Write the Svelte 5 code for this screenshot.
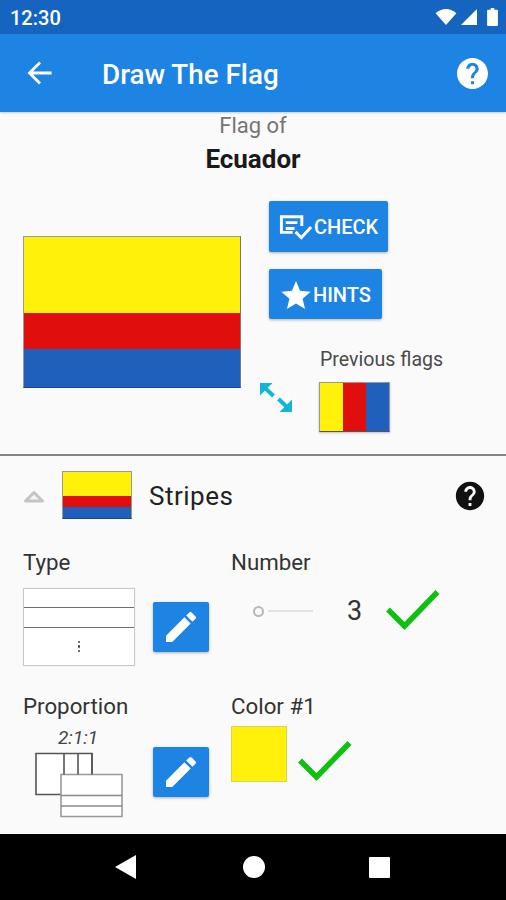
<script>
  const pencil = "M3 17.25V21h3.75L17.81 9.94l-3.75-3.75L3 17.25zM20.71 7.04a1 1 0 0 0 0-1.41l-2.34-2.34a1 1 0 0 0-1.41 0l-1.83 1.83 3.75 3.75 1.83-1.83z";
  const help = "M12 2C6.48 2 2 6.48 2 12s4.48 10 10 10 10-4.48 10-10S17.52 2 12 2zm1 17h-2v-2h2v2zm2.07-7.75l-.9.92C13.45 12.9 13 13.5 13 15h-2v-.5c0-1.1.45-2.1 1.17-2.83l1.24-1.26c.37-.36.59-.86.59-1.41 0-1.1-.9-2-2-2s-2 .9-2 2H8c0-2.21 1.79-4 4-4s4 1.79 4 4c0 .88-.36 1.68-.93 2.25z";
</script>

<div class="screen">
  <header class="status">
    <span class="time">12:30</span>
    <span class="status-icons">
      <svg class="wifi" width="22" height="16" viewBox="0 0 22 17"><path d="M0 4.500C3 1.700 6.800 0 11 0s8 1.700 11 4.500L11 17z" fill="#fff"/></svg>
      <svg class="signal" width="18" height="16" viewBox="0 0 17 17"><path d="M0 17L17 0v17z" fill="#fff"/></svg>
      <svg class="battery" width="11" height="18" viewBox="0 0 12 20"><path d="M4 0h4v2h3a1 1 0 0 1 1 1v16a1 1 0 0 1-1 1H1a1 1 0 0 1-1-1V3a1 1 0 0 1 1-1h3z" fill="#fff"/></svg>
    </span>
  </header>

  <nav class="appbar">
    <svg class="back" width="26" height="26" viewBox="0 0 26 26"><path d="M24.500 13H3M13 2.500L2.500 13 13 23.500" fill="none" stroke="#fff" stroke-width="2.800"/></svg>
    <h1>Draw The Flag</h1>
    <svg width="31" height="31" viewBox="2 2 20 20"><path d={help} fill="#fff"/></svg>
  </nav>

  <main>
    <div class="title">
      <div class="flag-of">Flag of</div>
      <div class="country">Ecuador</div>
    </div>

    <section class="top">
      <div class="flag big"><i class="y"></i><i class="r"></i><i class="b"></i></div>
      <div class="expand-col">
        <svg width="32" height="30" viewBox="0 0 32 30" fill="#12b4d8">
          <path d="M0 0h12.500L0 12.500z"/>
          <path d="M32 29H19.500L32 16.500z"/>
          <path d="M4 4l9.500 9M28 25l-9.500-9" stroke="#12b4d8" stroke-width="4" fill="none"/>
        </svg>
      </div>
      <div class="actions">
        <button class="btn check">
          <svg width="35" height="30" viewBox="0 0 36 30">
            <path d="M2 3h24v11h-3V6H5v13h10v3H2z M8 9h12v3H8z M8 15h9v3H8z" fill="#fff"/>
            <path d="M18 20l6 6 10-11" fill="none" stroke="#fff" stroke-width="3"/>
          </svg>
          <span>CHECK</span>
        </button>
        <button class="btn hints">
          <svg width="30" height="29" viewBox="0 0 31 30"><path d="M15.500 1l4.200 10.200 11 .9-8.400 7.200 2.600 10.700-9.400-5.800-9.400 5.800 2.600-10.700L.3 12.100l11-.9z" fill="#fff"/></svg>
          <span>HINTS</span>
        </button>
        <div class="previous">
          <div class="prev-label">Previous flags</div>
          <div class="flag mini-v"><i class="y"></i><i class="r"></i><i class="b"></i></div>
        </div>
      </div>
    </section>

    <hr />

    <section class="stripes">
      <div class="stripes-head">
        <svg width="22" height="13" viewBox="0 0 22 13"><path d="M11 2.500L2.500 11h17z" fill="#f4f4f4" stroke="#c4c4c4" stroke-width="3" stroke-linejoin="round"/></svg>
        <div class="flag small"><i class="y"></i><i class="r"></i><i class="b"></i></div>
        <h2>Stripes</h2>
        <svg class="head-help" width="34" height="34" viewBox="0 0 24 24"><path d={help} fill="#111"/></svg>
      </div>

      <div class="grid">
        <div class="cell">
          <div class="label">Type</div>
          <div class="row type-row">
            <div class="type-box">
              <div class="type-line"></div>
              <div class="type-line"></div>
              <div class="type-dots"><b></b><b></b><b></b></div>
            </div>
            <button class="edit" aria-label="Edit type">
              <svg width="40" height="40" viewBox="0 0 24 24"><path d={pencil} fill="#fff"/></svg>
            </button>
          </div>
        </div>

        <div class="cell">
          <div class="label">Number</div>
          <div class="row number-row">
            <div class="slider"><span class="thumb"></span><span class="track"></span></div>
            <span class="num">3</span>
            <svg width="54" height="42" viewBox="0 0 54 42"><path d="M2 20.500l16.500 16.500L51.500 3" fill="none" stroke="#10c010" stroke-width="5.500"/></svg>
          </div>
        </div>

        <div class="cell">
          <div class="label">Proportion</div>
          <div class="row prop-row">
            <div class="prop">
              <div class="ratio">2:1:1</div>
              <svg width="90" height="66" viewBox="0 0 90 66" fill="none">
                <path d="M1 1.500h56v41H1z" fill="#fff" stroke="#555" stroke-width="1.600"/>
                <path d="M26 22.500h61v42H26z" fill="#fff" stroke="#999" stroke-width="1.600"/>
                <path d="M26 43.500h61M26 54h61" stroke="#888" stroke-width="1.600"/>
                <path d="M29 22.500v-21M43 22.500v-21M57 22.500v-21" stroke="#555" stroke-width="1.600"/>
              </svg>
            </div>
            <button class="edit" aria-label="Edit proportion">
              <svg width="40" height="40" viewBox="0 0 24 24"><path d={pencil} fill="#fff"/></svg>
            </button>
          </div>
        </div>

        <div class="cell">
          <div class="label">Color #1</div>
          <div class="row color-row">
            <div class="swatch"></div>
            <svg width="54" height="42" viewBox="0 0 54 42"><path d="M2 20.500l16.500 16.500L51.500 3" fill="none" stroke="#10c010" stroke-width="5.500"/></svg>
          </div>
        </div>
      </div>
    </section>
  </main>

  <footer class="navbar">
    <svg width="22" height="24" viewBox="0 0 22 24"><path d="M21 0v24L0 12z" fill="#fff"/></svg>
    <span class="circle"></span>
    <span class="square"></span>
  </footer>
</div>

<style>
  :global(body) { margin: 0; background: #fafafa; }
  .screen {
    width: 506px; height: 900px; display: flex; flex-direction: column;
    font-family: Roboto, sans-serif; background: #fafafa; overflow: hidden; color: #222;
  }
  .status {
    height: 34px; background: #1565c0; color: #fff; display: flex; align-items: center;
    justify-content: space-between; padding: 0 8px 0 10px; flex: none;
  }
  .time { font-size: 20px; font-weight: 500; padding-top: 2px; }
  .status-icons { display: flex; align-items: center; gap: 3px; }
  .battery { margin-left: 6px; }
  .appbar {
    height: 78px; background: #1e84e4; flex: none; display: flex; align-items: center;
    padding: 0 18px 0 27px; box-shadow: 0 1px 2px rgba(0,0,0,.2); position: relative;
  }
  .appbar h1 { flex: 1; margin: 2px 0 0 49px; color: #fff; font-size: 27.800px; font-weight: 500; }
  main { flex: 1; min-height: 0; overflow: hidden; }
  .title { text-align: center; height: 66px; padding-top: 2px; box-sizing: border-box; }
  .flag-of { font-size: 22px; line-height: 24px; color: #757575; }
  .country { font-size: 26px; font-weight: 700; line-height: 28px; margin-top: 7px; color: #1a1a1a; }

  .top { display: flex; height: 276px; padding-left: 23px; box-sizing: border-box; align-items: flex-start; position: relative; }
  .flag { display: flex; flex-direction: column; box-sizing: border-box; }
  .flag i { display: block; }
  .y { background: #fff10a; } .r { background: #e10e0e; } .b { background: #1f60bd; }
  .big { width: 218px; height: 152px; margin-top: 58px; border: 1px solid #999; border-right-color: #777; border-bottom-color: #14449a; }
  .big .y { flex: 76; } .big .r { flex: 36; } .big .b { flex: 38; }
  .expand-col { width: 0; }
  .expand-col svg { display: block; margin: 205px 0 0 19px; }
  .actions { margin-left: 28px; margin-top: 23px; display: flex; flex-direction: column; align-items: flex-start; flex: 1; }
  .btn {
    height: 51px; background: #1e84e4; color: #fff; border: 0; border-radius: 2px; display: flex; align-items: center;
    padding: 0 0 0 9px; font: 500 20px Roboto, sans-serif; box-shadow: 0 1px 3px rgba(0,0,0,.3); gap: 1px;
  }
  .btn span { padding-top: 1px; }
  .check { width: 119px; }
  .hints { width: 113px; height: 50px; margin-top: 17px; gap: 2px; padding-left: 12px; }
  .previous { margin: 29px 0 0 51px; }
  .prev-label { font-size: 19.600px; line-height: 24px; color: #4a4a4a; white-space: nowrap; }
  .mini-v { flex-direction: row; width: 71px; height: 50px; margin: 10px 0 0 -1px; border: 1px solid #999; border-bottom-color: #555; box-shadow: 0 1px 2px rgba(0,0,0,.25); }
  .mini-v i { flex: 1; }

  hr { margin: 0; border: 0; height: 2px; background: #858585; }

  .stripes { padding: 15px 0 0 23px; }
  .stripes-head { display: flex; align-items: center; height: 48px; padding-right: 19px; }
  .stripes-head h2 { flex: 1; margin: 2px 0 0 17px; font-size: 26px; font-weight: 400; letter-spacing: .5px; color: #222; }
  .small { width: 70px; height: 48px; margin-left: 17px; border: 1px solid #999; border-bottom-color: #14449a; }
  .small .y { flex: 25; } .small .r { flex: 11; } .small .b { flex: 12; }
  .stripes-head svg:first-child { margin-top: 3px; }
  .head-help { margin-top: 2px; }

  .grid { display: grid; grid-template-columns: 208px 1fr; grid-template-rows: 144px auto; margin-top: 30px; }
  .label { font-size: 22.300px; line-height: 26px; color: #333; }
  .row { display: flex; }
  .type-row { margin-top: 13px; align-items: center; gap: 18px; }
  .type-box {
    width: 112px; height: 78px; box-sizing: border-box; background: #fff; border: 1px solid #c8c8c8;
    border-radius: 1px; box-shadow: 0 0 1px rgba(0,0,0,.2); display: flex; flex-direction: column;
  }
  .type-line { height: 19px; border-bottom: 1.500px solid #707070; flex: none; }
  .type-line:first-child { height: 18px; }
  .type-dots { flex: 1; display: flex; flex-direction: column; align-items: center; justify-content: center; gap: 2px; }
  .type-dots b { width: 2.500px; height: 2.500px; background: #444; border-radius: 50%; }
  .edit {
    width: 56px; height: 50px; border: 0; border-radius: 2px; background: #1e84e4; padding: 0;
    display: flex; align-items: center; justify-content: center; box-shadow: 0 1px 3px rgba(0,0,0,.3);
  }
  .number-row { align-items: center; margin-top: 6px; height: 60px; }
  .slider { display: flex; align-items: center; gap: 4px; margin-left: 22px; width: 60px; }
  .thumb { width: 11px; height: 11px; box-sizing: border-box; border: 2.500px solid #b8b8b8; border-radius: 50%; flex: none; }
  .track { height: 2px; width: 45px; background: #e2e2e2; }
  .num { font-size: 27px; margin-left: 34px; color: #333; line-height: 30px; }
  .number-row svg { margin-left: 24px; margin-top: -2px; }
  .prop-row { gap: 30px; }
  .prop { width: 100px; padding-left: 12px; box-sizing: border-box; }
  .ratio { font-style: italic; font-size: 19px; line-height: 20px; margin: 9px 0 0 23px; color: #444; }
  .prop svg { display: block; margin-top: 4px; }
  .prop-row .edit { margin-top: 28px; }
  .color-row { gap: 11px; align-items: flex-end; margin-top: 7px; }
  .swatch { width: 56px; height: 56px; box-sizing: border-box; background: #fff10a; border: 1px solid #e0d050; }

  .navbar { height: 66px; background: #000; flex: none; display: flex; align-items: center; position: relative; padding-left: 115px; }
  .circle { width: 22px; height: 22px; border-radius: 50%; background: #fff; margin-left: 106px; }
  .square { width: 21px; height: 21px; border-radius: 1px; background: #fff; margin-left: 104px; }
</style>
